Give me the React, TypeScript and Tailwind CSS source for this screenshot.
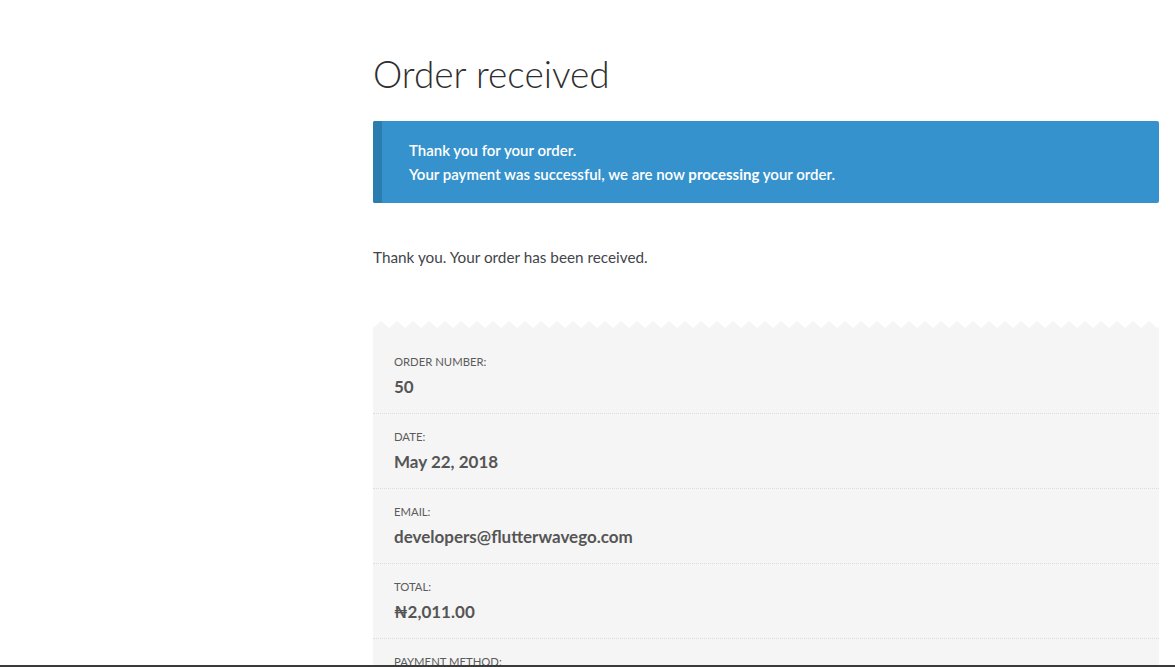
const rows = [
  { label: "Order number:", value: "50" },
  { label: "Date:", value: "May 22, 2018" },
  { label: "Email:", value: "developers@flutterwavego.com" },
  { label: "Total:", value: "₦2,011.00" },
  { label: "Payment method:", value: "Flutterwave" },
];

function Zigzag() {
  return (
    <svg className="block h-[8px] w-full">
      <defs>
        <pattern id="zz" width="16" height="8" patternUnits="userSpaceOnUse">
          <polygon points="0,7 8,0 16,7 16,8 0,8" fill="#f5f5f5" />
        </pattern>
      </defs>
      <rect width="100%" height="8" fill="url(#zz)" />
    </svg>
  );
}

export default function App() {
  return (
    <div className="relative h-[667px] w-[1175px] overflow-hidden bg-white font-['Lato',sans-serif]">
      <div className="ml-[373px] w-[786px] pt-[48px]">
        <h1 className="text-[37px] font-light leading-[52px] text-[#2f2f2f]">
          Order received
        </h1>

        <div className="mt-[21px] flex h-[82px] rounded-[2px] bg-[#3592cc]">
          <div className="w-[9px] rounded-l-[2px] bg-[#2b7db0]"></div>
          <div className="flex flex-col justify-center pl-[27px] text-[15px] font-semibold leading-[24px] text-white">
            <p>Thank you for your order.</p>
            <p>
              Your payment was successful, we are now{" "}
              <strong className="font-bold">processing</strong> your order.
            </p>
          </div>
        </div>

        <p className="mt-[42px] text-[15.3px] leading-[24px] text-[#43454b]">
          Thank you. Your order has been received.
        </p>

        <div className="mt-[52px]">
          <Zigzag />
          <ul className="bg-[#f5f5f5] pt-[10px]">
            {rows.map((r) => (
              <li
                key={r.label}
                className="h-[75px] border-b border-dotted border-[#dcdcdc] px-[21px] pt-[14px]"
              >
                <div className="text-[11.3px] uppercase leading-[18px] text-[#5b5b5b]">
                  {r.label}
                </div>
                <div className="mt-[4px] text-[17px] font-bold leading-[24px] text-[#555]">
                  {r.value}
                </div>
              </li>
            ))}
          </ul>
        </div>
      </div>
      <div className="absolute bottom-0 left-0 h-[2px] w-full bg-[#3a3a3a]"></div>
    </div>
  );
}
